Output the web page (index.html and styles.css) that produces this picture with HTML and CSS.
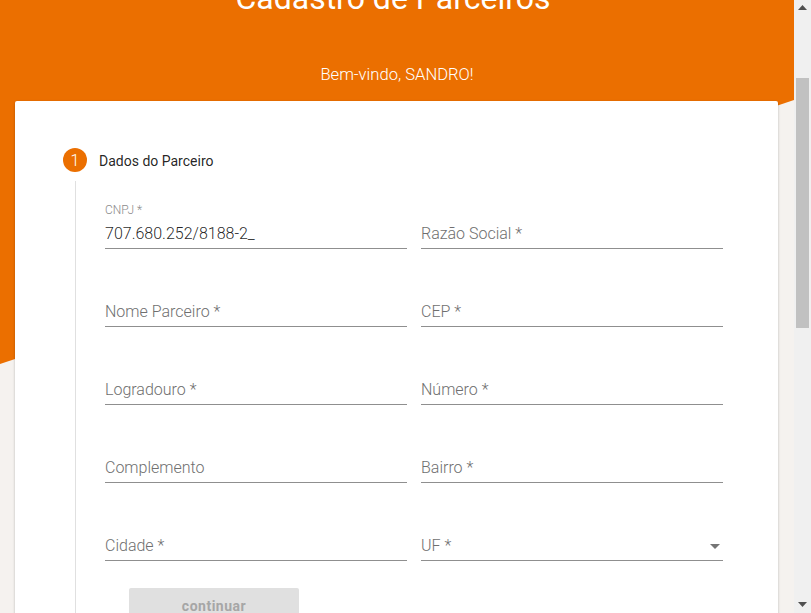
FILE: index.html
```html
<!DOCTYPE html>
<html lang="pt-BR">
<head>
<meta charset="utf-8">
<title>Cadastro de Parceiros</title>
<link rel="stylesheet" href="styles.css">
</head>
<body>
<div class="window">
  <main class="page">
    <div class="content">
      <header class="hero">
        <h1 class="hero-title">Cadastro de Parceiros</h1>
        <p class="hero-sub">Bem-vindo, SANDRO!</p>
      </header>
      <section class="card">
        <div class="step-head">
          <span class="step-icon">1</span>
          <span class="step-label">Dados do Parceiro</span>
        </div>
        <div class="step-body">
          <div class="form-grid">
            <div class="field">
              <span class="field-label">CNPJ *</span>
              <div class="field-box"><span class="value">707.680.252/8188-2_</span></div>
            </div>
            <div class="field">
              <span class="field-label"></span>
              <div class="field-box"><span class="placeholder">Razão Social *</span></div>
            </div>
            <div class="field">
              <span class="field-label"></span>
              <div class="field-box"><span class="placeholder">Nome Parceiro *</span></div>
            </div>
            <div class="field">
              <span class="field-label"></span>
              <div class="field-box"><span class="placeholder">CEP *</span></div>
            </div>
            <div class="field">
              <span class="field-label"></span>
              <div class="field-box"><span class="placeholder">Logradouro *</span></div>
            </div>
            <div class="field">
              <span class="field-label"></span>
              <div class="field-box"><span class="placeholder">Número *</span></div>
            </div>
            <div class="field">
              <span class="field-label"></span>
              <div class="field-box"><span class="placeholder">Complemento</span></div>
            </div>
            <div class="field">
              <span class="field-label"></span>
              <div class="field-box"><span class="placeholder">Bairro *</span></div>
            </div>
            <div class="field">
              <span class="field-label"></span>
              <div class="field-box"><span class="placeholder">Cidade *</span></div>
            </div>
            <div class="field">
              <span class="field-label"></span>
              <div class="field-box select-box">
                <span class="placeholder">UF *</span>
                <svg class="select-arrow" width="10" height="5" viewBox="0 0 10 5"><path d="M0 0h10L5 5z" fill="#757575"/></svg>
              </div>
            </div>
          </div>
          <button class="btn" type="button" disabled>continuar</button>
        </div>
      </section>
    </div>
  </main>
  <div class="scrollbar">
    <svg class="sb-arrow" width="9" height="5" viewBox="0 0 9 5"><path d="M0 5h9L4.5 0z" fill="#505050"/></svg>
    <div class="sb-track">
      <div class="sb-thumb"></div>
    </div>
    <svg class="sb-arrow" width="9" height="5" viewBox="0 0 9 5"><path d="M0 0h9L4.5 5z" fill="#505050"/></svg>
  </div>
</div>
</body>
</html>
```
FILE: styles.css
```css
* { box-sizing: border-box; }

html, body {
  margin: 0;
  padding: 0;
  height: 100%;
  overflow: hidden;
}

body {
  font-family: Roboto, "Liberation Sans", Arial, sans-serif;
  background: #f5f2ef;
}

.window {
  display: flex;
  width: 811px;
  height: 613px;
}

.page {
  flex: 1;
  overflow: hidden;
  background: #f5f2ef;
}

.content {
  margin-top: -40px;
}

.hero {
  height: 404px;
  background: #eb6f00;
  clip-path: polygon(0 0, 100% 0, 100% 140px, 0 100%);
  padding-top: 20px;
  color: #fff;
  text-align: center;
}

.hero-title {
  margin: 0 8px 0 0;
  font-size: 32px;
  line-height: 36px;
  font-weight: 400;
}

.hero-sub {
  margin: 49px 0 0;
  font-size: 16.6px;
  line-height: 20px;
  font-weight: 300;
}

.card {
  margin: -263px 16px 0 15px;
  position: relative;
  background: #fff;
  border-radius: 2px;
  box-shadow: 0 1px 3px rgba(0,0,0,0.2), 0 1px 1px rgba(0,0,0,0.14), 0 2px 1px -1px rgba(0,0,0,0.12);
  padding: 47px 55px 60px 48px;
}

.step-head {
  display: flex;
  align-items: center;
  height: 24px;
}

.step-icon {
  width: 24px;
  height: 24px;
  border-radius: 50%;
  background: #eb6f00;
  color: #fff;
  font-size: 16px;
  font-weight: 300;
  display: flex;
  align-items: center;
  justify-content: center;
}

.step-label {
  margin-left: 12px;
  margin-top: 2px;
  font-size: 14px;
  color: rgba(0,0,0,0.87);
}

.step-body {
  margin: 9px 0 0 12px;
  border-left: 1px solid #e0e0e0;
  padding: 22px 0 0 29px;
}

.form-grid {
  display: grid;
  grid-template-columns: 1fr 1fr;
  column-gap: 14px;
  row-gap: 32px;
}

.field {
  display: flex;
  flex-direction: column;
}

.field-label {
  height: 14px;
  font-size: 12px;
  line-height: 14px;
  font-weight: 300;
  color: #8c8c8c;
  margin-bottom: 2px;
}

.field-box {
  display: flex;
  align-items: center;
  padding: 5px 0 5px;
  line-height: 19px;
  font-size: 16px;
  border-bottom: 1px solid #8f8f8f;
}

.value {
  color: rgba(0,0,0,0.87);
  font-weight: 300;
}

.placeholder {
  color: #6f6f6f;
  font-weight: 300;
}

.select-box {
  justify-content: space-between;
}

.select-arrow {
  margin-right: 3px;
  margin-top: 1px;
}

.btn {
  margin: 27px 0 0 24px;
  width: 170px;
  height: 36px;
  border: none;
  border-radius: 2px;
  background: #e0e0e0;
  color: #a6a6a6;
  font-family: Roboto, "Liberation Sans", Arial, sans-serif;
  font-size: 14px;
  font-weight: 700;
  letter-spacing: 0.5px;
  padding: 0;
}

.scrollbar {
  width: 17px;
  background: #f0f0f0;
  display: flex;
  flex-direction: column;
  align-items: center;
  padding: 5px 0 6px;
}

.sb-track {
  flex: 1;
  width: 100%;
  padding: 68px 2px 0;
}

.sb-thumb {
  width: 13px;
  height: 250px;
  background: #c1c1c1;
}
```
